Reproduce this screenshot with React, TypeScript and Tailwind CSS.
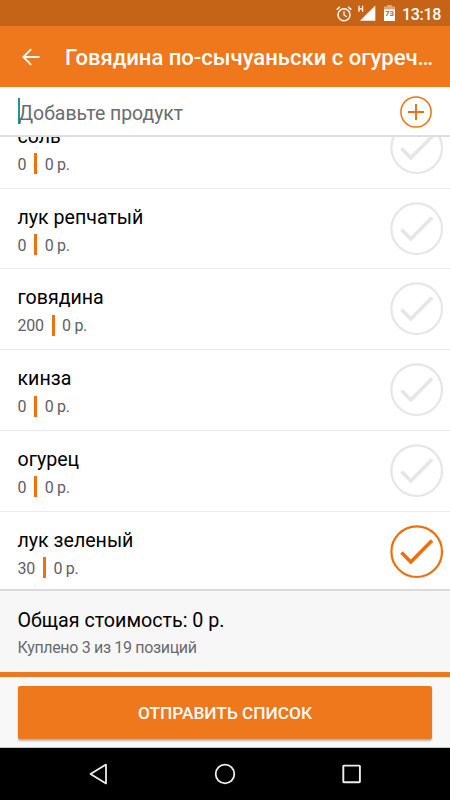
import React from "react";

type Item = { name: string; amount: string; price: string; bought?: boolean };

const items: Item[] = [
  { name: "соль", amount: "0", price: "0 р." },
  { name: "лук репчатый", amount: "0", price: "0 р." },
  { name: "говядина", amount: "200", price: "0 р." },
  { name: "кинза", amount: "0", price: "0 р." },
  { name: "огурец", amount: "0", price: "0 р." },
  { name: "лук зеленый", amount: "30", price: "0 р.", bought: true },
];

function StatusBar() {
  return (
    <div className="flex h-[26px] shrink-0 items-center justify-end bg-[#c56316] pr-[9px] text-white">
      <svg width="16" height="16" viewBox="0 0 16 16" fill="none" stroke="currentColor" className="mr-[6px] mt-px">
        <circle cx="8" cy="8.7" r="6" strokeWidth="1.5" />
        <path d="M8 5.2v3.8l2.7 1.7" strokeWidth="1.2" />
        <path d="M.7 3.6 4 .9M15.3 3.6 12 .9" strokeWidth="1.5" />
      </svg>
      <svg width="18" height="16" viewBox="0 0 18 16" className="mr-[8px]">
        <path d="M17.3.5v15.3H2z" fill="currentColor" />
        <path d="M1 .8v6M4.6.8v6M.8 3.8h3.8" stroke="currentColor" strokeWidth="1.3" />
      </svg>
      <svg width="11" height="16" viewBox="0 0 11 16" className="mr-[7px]">
        <path d="M3.2 0h4.6v1.5H11V6H0V1.5h3.2z" fill="#dfa77d" />
        <path d="M0 4.5h11V16H0z" fill="currentColor" />
        <text x="5.5" y="11" textAnchor="middle" fontSize="8" fontWeight="700" fill="#c56316" className="font-['Roboto',sans-serif]">73</text>
      </svg>
      <span className="mt-[3px] text-[16px] font-medium leading-[20px] tracking-[-0.3px]">13:18</span>
    </div>
  );
}

function CheckCircle({ bought }: { bought?: boolean }) {
  return (
    <svg
      width="54"
      height="54"
      viewBox="0 0 54 54"
      fill="none"
      className={bought ? "shrink-0 text-[#ef6f0c]" : "shrink-0 text-[#e6e6e6]"}
      stroke="currentColor"
    >
      <circle cx="26.7" cy="26.7" r="25.3" strokeWidth="2.2" />
      <path d="M11.5 27.5 20.8 36.9 42 15.5" strokeWidth="3.6" />
    </svg>
  );
}

function Row({ item }: { item: Item }) {
  return (
    <div className="flex h-[80.8px] shrink-0 items-center justify-between border-b border-[#ebebeb] pl-[17.5px] pr-[6px]">
      <div className="pt-[4px]">
        <div className="text-[19.6px] leading-[26px] text-black">{item.name}</div>
        <div className="mt-[4px] flex h-[22px] items-center text-[16px] tracking-[-0.3px] text-[#5f6066]">
          <span>{item.amount}</span>
          <span className="-mt-[2px] ml-[8px] mr-[7.5px] h-[21px] w-[3px] bg-[#f4700f]" />
          <span>{item.price}</span>
        </div>
      </div>
      <CheckCircle bought={item.bought} />
    </div>
  );
}

export default function App() {
  return (
    <div className="flex h-[800px] w-[450px] flex-col overflow-hidden bg-white font-['Roboto','Noto_Sans',sans-serif]">
      <StatusBar />
      <header className="flex h-[61px] shrink-0 items-center bg-[#ef771c] text-white">
        <svg width="18" height="18" viewBox="0 0 18 18" fill="none" stroke="currentColor" strokeWidth="1.9" className="ml-[22px] mr-[25px]">
          <path d="M17.5 9H1.5M9.2 1.2 1.4 9l7.8 7.8" />
        </svg>
        <h1 className="mt-[2px] whitespace-nowrap text-[22.05px] font-medium leading-[28px]">Говядина по-сычуаньски с огуреч…</h1>
      </header>
      <div className="flex h-[50px] shrink-0 items-center justify-between border-b-2 border-[#dedede] pl-[18px] pr-[18px]">
        <div className="flex items-center">
          <span className="h-[26px] w-[1.5px] bg-[#1c9a86]" />
          <span className="-ml-px mt-[5px] text-[19.4px] leading-[26px] text-[#6b6b6f]">Добавьте продукт</span>
        </div>
        <svg width="32" height="32" viewBox="0 0 32 32" fill="none" stroke="#ef6f0c" className="mt-[2px]">
          <circle cx="16" cy="16" r="15.1" strokeWidth="1.5" />
          <path d="M16 8v16M8 16h16" strokeWidth="1.9" />
        </svg>
      </div>
      <main className="flex h-[452px] shrink-0 flex-col overflow-hidden">
        <div className="-mt-[29.2px] flex flex-col">
          {items.map((item) => (
            <Row key={item.name} item={item} />
          ))}
        </div>
      </main>
      <section className="h-[83px] shrink-0 border-t-2 border-[#dbdbdb] bg-[#f7f7f7] pl-[17.5px] pt-[17px]">
        <div className="text-[19.7px] leading-[26px] text-black">Общая стоимость: 0 р.</div>
        <div className="mt-[4px] text-[16px] leading-[20px] tracking-[-0.33px] text-[#6b6b6f]">Куплено 3 из 19 позиций</div>
      </section>
      <div className="h-[5px] shrink-0 bg-[#ef771c]" />
      <div className="h-[71px] shrink-0 border-b border-[#c5c5c5] bg-[#f8f8f8] px-[18px] pt-[9px]">
        <button className="block h-[53px] w-full rounded-[2px] bg-[#ef771c] pt-[2px] text-[17.3px] font-medium text-white shadow-[0_2px_2px_rgba(0,0,0,0.28)]">
          ОТПРАВИТЬ СПИСОК
        </button>
      </div>
      <nav className="flex h-[52px] shrink-0 items-center bg-black pl-[88px]">
        <svg width="20" height="22" viewBox="0 0 20 22" fill="none" stroke="#eee" strokeWidth="1.8" strokeLinejoin="round">
          <path d="M18 1.6v18.8L2.5 11z" />
        </svg>
        <svg width="22" height="22" viewBox="0 0 22 22" fill="none" stroke="#eee" strokeWidth="1.8" className="ml-[106px]">
          <circle cx="11" cy="11" r="9.3" />
        </svg>
        <svg width="20" height="20" viewBox="0 0 20 20" fill="none" stroke="#eee" strokeWidth="1.9" className="ml-[106px]">
          <rect x="1.3" y="1.6" width="16.6" height="16.6" rx=".6" />
        </svg>
      </nav>
    </div>
  );
}
